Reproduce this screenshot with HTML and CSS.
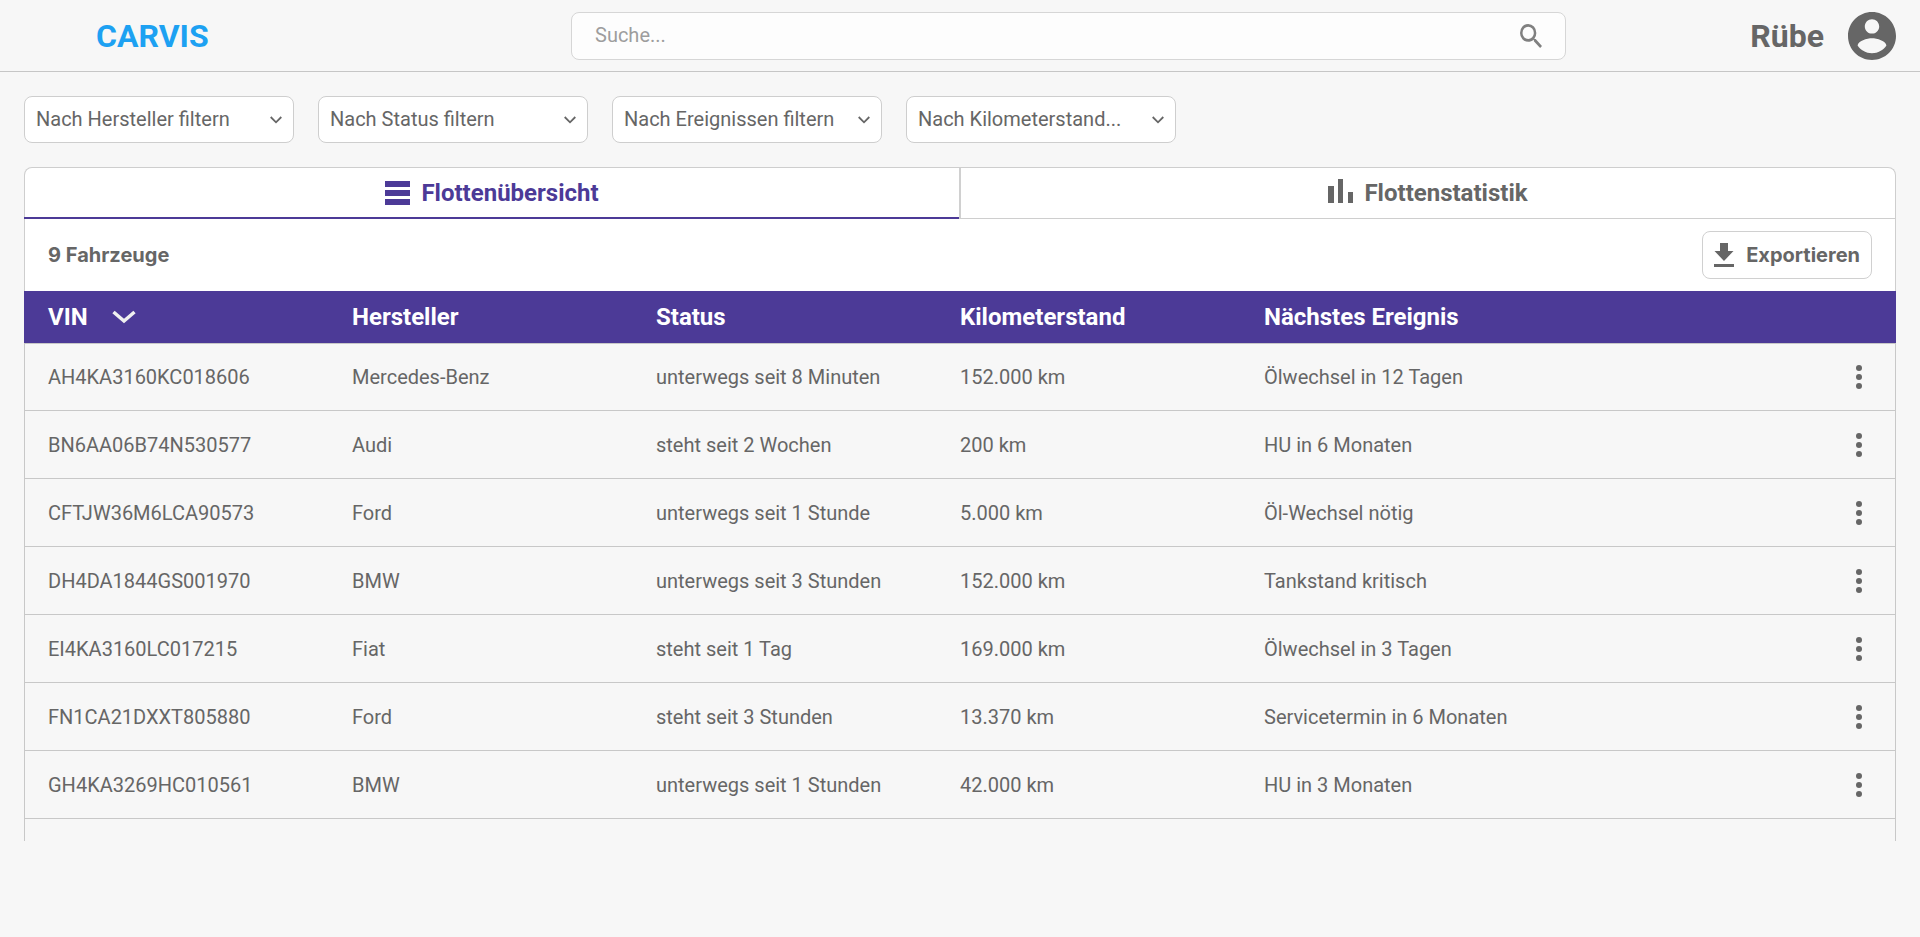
FILE: index.html
```html
<!DOCTYPE html>
<html lang="de">
<head>
<meta charset="utf-8">
<title>CARVIS</title>
<link rel="stylesheet" href="styles.css">
</head>
<body>
<header class="topbar">
  <div class="brand">CARVIS</div>
  <div class="search">
    <span>Suche...</span>
    <svg class="search-icon" width="22" height="24" viewBox="3 3 17.5 17.5" preserveAspectRatio="none"><path d="M15.5 14h-.79l-.28-.27A6.47 6.47 0 0 0 16 9.5 6.5 6.5 0 1 0 9.5 16c1.61 0 3.09-.59 4.23-1.57l.27.28v.79l5 4.99L20.49 19l-4.99-5zm-6 0a4.5 4.5 0 1 1 0-9 4.5 4.5 0 0 1 0 9z"/></svg>
  </div>
  <div class="user">
    <span>Rübe</span>
    <svg width="48" height="48" viewBox="2 2 20 20"><path d="M12 2C6.48 2 2 6.48 2 12s4.48 10 10 10 10-4.480 10-10S17.520 2 12 2zm0 3c1.660 0 3 1.340 3 3s-1.340 3-3 3-3-1.340-3-3 1.340-3 3-3zm0 14.200c-2.500 0-4.710-1.280-6-3.220.030-1.990 4-3.080 6-3.080 1.990 0 5.970 1.090 6 3.080-1.290 1.940-3.500 3.220-6 3.220z"/></svg>
  </div>
</header>
<main>
  <div class="filters">
    <div class="filter"><span>Nach Hersteller filtern</span><svg class="chev" width="12" height="8" viewBox="0 0 12 8"><path d="M.7 1L6 6.300 11.300 1"/></svg></div>
    <div class="filter"><span>Nach Status filtern</span><svg class="chev" width="12" height="8" viewBox="0 0 12 8"><path d="M.7 1L6 6.300 11.300 1"/></svg></div>
    <div class="filter"><span>Nach Ereignissen filtern</span><svg class="chev" width="12" height="8" viewBox="0 0 12 8"><path d="M.7 1L6 6.300 11.300 1"/></svg></div>
    <div class="filter"><span>Nach Kilometerstand...</span><svg class="chev" width="12" height="8" viewBox="0 0 12 8"><path d="M.7 1L6 6.300 11.300 1"/></svg></div>
  </div>
  <section class="panel">
    <nav class="tabs">
      <div class="tab active"><svg width="25" height="24" viewBox="0 0 25 24"><path d="M0 0h25v6H0zM0 9h25v6H0zM0 18h25v6H0z"/></svg><span>Flottenübersicht</span></div>
      <div class="tab"><svg class="bars" width="25" height="24" viewBox="0 0 25 24"><path d="M0 7h6v17H0zM10 0h5v24h-5zM20 13h5v11h-5z"/></svg><span>Flottenstatistik</span></div>
    </nav>
    <div class="summary">
      <span>9 Fahrzeuge</span>
      <div class="export"><svg width="20" height="24" viewBox="0 0 20 24"><path d="M6 0h8v8h5.500L10 18 .5 8H6zM0 21h20v3H0z"/></svg><span>Exportieren</span></div>
    </div>
    <div class="row head"><span>VIN<svg class="sort" width="24" height="16" viewBox="0 0 24 16"><path d="M1.500 3L12 12l10.500-9"/></svg></span><span>Hersteller</span><span>Status</span><span>Kilometerstand</span><span>Nächstes Ereignis</span></div>
    <div class="list">
      <div class="row"><span>AH4KA3160KC018606</span><span>Mercedes-Benz</span><span>unterwegs seit 8 Minuten</span><span>152.000 km</span><span>Ölwechsel in 12 Tagen</span><svg class="more" width="6" height="24" viewBox="0 0 6 24"><circle cx="3" cy="3" r="3"/><circle cx="3" cy="12" r="3"/><circle cx="3" cy="21" r="3"/></svg></div>
      <div class="row"><span>BN6AA06B74N530577</span><span>Audi</span><span>steht seit 2 Wochen</span><span>200 km</span><span>HU in 6 Monaten</span><svg class="more" width="6" height="24" viewBox="0 0 6 24"><circle cx="3" cy="3" r="3"/><circle cx="3" cy="12" r="3"/><circle cx="3" cy="21" r="3"/></svg></div>
      <div class="row"><span>CFTJW36M6LCA90573</span><span>Ford</span><span>unterwegs seit 1 Stunde</span><span>5.000 km</span><span>Öl-Wechsel nötig</span><svg class="more" width="6" height="24" viewBox="0 0 6 24"><circle cx="3" cy="3" r="3"/><circle cx="3" cy="12" r="3"/><circle cx="3" cy="21" r="3"/></svg></div>
      <div class="row"><span>DH4DA1844GS001970</span><span>BMW</span><span>unterwegs seit 3 Stunden</span><span>152.000 km</span><span>Tankstand kritisch</span><svg class="more" width="6" height="24" viewBox="0 0 6 24"><circle cx="3" cy="3" r="3"/><circle cx="3" cy="12" r="3"/><circle cx="3" cy="21" r="3"/></svg></div>
      <div class="row"><span>EI4KA3160LC017215</span><span>Fiat</span><span>steht seit 1 Tag</span><span>169.000 km</span><span>Ölwechsel in 3 Tagen</span><svg class="more" width="6" height="24" viewBox="0 0 6 24"><circle cx="3" cy="3" r="3"/><circle cx="3" cy="12" r="3"/><circle cx="3" cy="21" r="3"/></svg></div>
      <div class="row"><span>FN1CA21DXXT805880</span><span>Ford</span><span>steht seit 3 Stunden</span><span>13.370 km</span><span>Servicetermin in 6 Monaten</span><svg class="more" width="6" height="24" viewBox="0 0 6 24"><circle cx="3" cy="3" r="3"/><circle cx="3" cy="12" r="3"/><circle cx="3" cy="21" r="3"/></svg></div>
      <div class="row"><span>GH4KA3269HC010561</span><span>BMW</span><span>unterwegs seit 1 Stunden</span><span>42.000 km</span><span>HU in 3 Monaten</span><svg class="more" width="6" height="24" viewBox="0 0 6 24"><circle cx="3" cy="3" r="3"/><circle cx="3" cy="12" r="3"/><circle cx="3" cy="21" r="3"/></svg></div>
    </div>
  </section>
</main>
</body>
</html>
```
FILE: styles.css
```css
* { box-sizing: border-box; }
body {
  margin: 0;
  background: #f7f7f7;
  color: #666;
  font: 20px/24px Roboto, sans-serif;
}
svg { display: block; flex: none; fill: #666; }
.topbar {
  display: flex;
  align-items: center;
  height: 72px;
  padding: 0 24px 0 96px;
  border-bottom: 1px solid #c6c6c6;
}
.brand { width: 475px; color: #1da1f2; font-size: 32px; font-weight: 700; }
.search {
  display: flex;
  align-items: center;
  justify-content: space-between;
  width: 995px;
  height: 48px;
  padding: 0 23px;
  background: #fdfdfd;
  border: 1px solid #d6d6d6;
  border-radius: 8px;
  color: #9d9d9d;
}
.search span, .filter span { padding-bottom: 1px; }
.search-icon { fill: #808080; }
.user {
  display: flex;
  align-items: center;
  gap: 24px;
  margin-left: auto;
  font-size: 32px;
  font-weight: 700;
}
main { padding: 24px; }
.filters { display: flex; gap: 24px; }
.filter {
  display: flex;
  align-items: center;
  justify-content: space-between;
  width: 270px;
  height: 47px;
  padding: 0 11px;
  background: #fff;
  border: 1px solid #cecece;
  border-radius: 8px;
}
.chev { fill: none; stroke: #666; stroke-width: 1.8; overflow: visible; }
.panel { margin-top: 24px; }
.tabs {
  display: grid;
  grid-template-columns: 934px 936px;
  height: 52px;
  background: #fff;
  border: 1px solid #cecece;
  border-width: 1px 1px 0;
  border-radius: 8px 8px 0 0;
  font-size: 24px;
  font-weight: 700;
}
.tab {
  display: flex;
  align-items: center;
  justify-content: center;
  gap: 11px;
  border-bottom: 1px solid #cecece;
}
.tab + .tab { border-left: 2px solid #d0d0d0; }
.tab.active { position: relative; color: #4c3a97; border-bottom: 2px solid #4c3a97; }
.tab.active::after {
  content: "";
  position: absolute;
  left: -1px;
  right: 0;
  bottom: -2px;
  height: 2px;
  background: #4c3a97;
}
.active svg { fill: #4c3a97; }
.bars { margin-bottom: 4px; }
.summary {
  display: flex;
  align-items: center;
  justify-content: space-between;
  height: 72px;
  padding: 0 23px;
  background: #fff;
  border: solid #cecece;
  border-width: 0 1px;
  font-family: Inter, Roboto, sans-serif;
  font-weight: 700;
}
.export {
  display: flex;
  align-items: center;
  gap: 12px;
  height: 48px;
  padding: 0 11px;
  border: 1px solid #d0d0d0;
  border-radius: 8px;
}
.row {
  display: grid;
  grid-template-columns: repeat(5, 304px) 1fr;
  align-items: center;
  height: 68px;
  padding: 0 33px 0 23px;
  border-bottom: 1px solid #c8c8c8;
}
.head {
  height: 52px;
  padding-left: 24px;
  border: 0;
  background: #4c3a97;
  color: #fff;
  font-size: 24px;
  font-weight: 700;
}
.head span { display: flex; align-items: center; gap: 24px; }
.sort { fill: none; stroke: #f0f0f0; stroke-width: 3.5; overflow: visible; }
.list {
  height: 498px;
  border: solid #c8c8c8;
  border-width: 1px 1px 0;
}
.list .row:first-child { height: 67px; }
.more { justify-self: end; }
```
